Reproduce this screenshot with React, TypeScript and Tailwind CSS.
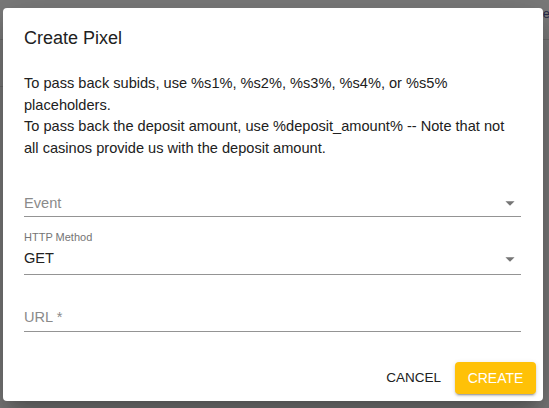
import React from "react";

function Arrow() {
  return (
    <svg width="22" height="22" viewBox="0 0 24 24" className="shrink-0">
      <path d="M7 10l5 5 5-5z" fill="#757575" />
    </svg>
  );
}

export default function App() {
  return (
    <div
      className="relative w-[549px] h-[408px] overflow-hidden bg-[#7b7b7b]"
      style={{ fontFamily: '"Liberation Sans", Arial, sans-serif' }}
    >
      {/* page behind the backdrop */}
      <div className="h-[40px] border-b border-[#6c6c6c] flex justify-end items-start">
        <span className="text-[13px] leading-none mt-[7px] mr-[-1px] text-[#2a2a4a]">ne</span>
      </div>
      <div className="h-[47px] border-b border-[#6c6c6c] w-[60px]" />

      {/* dialog */}
      <div className="absolute left-[3px] top-[8px] w-[540px] h-[393px] bg-white rounded-[4px] shadow-[0_11px_15px_-7px_rgba(0,0,0,0.2),0_24px_38px_3px_rgba(0,0,0,0.14),0_9px_46px_8px_rgba(0,0,0,0.12)] flex flex-col">
        <div className="px-[21px] pt-[17px] text-[18px] leading-[26px] text-[#212121]">Create Pixel</div>

        <div className="px-[21px] pt-[22px] text-[14.6px] leading-[21.5px] text-[#212121]">
          <p>To pass back subids, use %s1%, %s2%, %s3%, %s4%, or %s5% placeholders.</p>
          <p>To pass back the deposit amount, use %deposit_amount% -- Note that not all casinos provide us with the deposit amount.</p>
        </div>

        <div className="px-[21px] pr-[22px] mt-[31px] flex flex-col">
          {/* Event */}
          <div className="flex items-center justify-between h-[27px] border-b border-[#949494]">
            <span className="text-[14.6px] text-[#8a8a8a] mt-[1px]">Event</span>
            <Arrow />
          </div>

          {/* HTTP Method */}
          <div className="mt-[14px] text-[11px] leading-[13px] text-[#757575]">HTTP Method</div>
          <div className="flex items-center justify-between h-[31px] border-b border-[#949494]">
            <span className="text-[14.6px] text-[#212121]">GET</span>
            <Arrow />
          </div>

          {/* URL */}
          <div className="mt-[30px] flex items-center h-[27px] border-b border-[#949494]">
            <span className="text-[14.6px] text-[#8a8a8a]">URL *</span>
          </div>
        </div>

        <div className="mt-auto mb-[7px] mr-[7px] flex justify-end items-center gap-[6px]">
          <button className="h-[32px] px-[8px] text-[13.5px] text-[#212121] uppercase">Cancel</button>
          <button className="h-[32px] w-[81px] rounded-[4px] bg-[#ffc107] text-white text-[14px] uppercase shadow-[0_3px_1px_-2px_rgba(0,0,0,0.2),0_2px_2px_0_rgba(0,0,0,0.14),0_1px_5px_0_rgba(0,0,0,0.12)]">
            Create
          </button>
        </div>
      </div>
    </div>
  );
}
